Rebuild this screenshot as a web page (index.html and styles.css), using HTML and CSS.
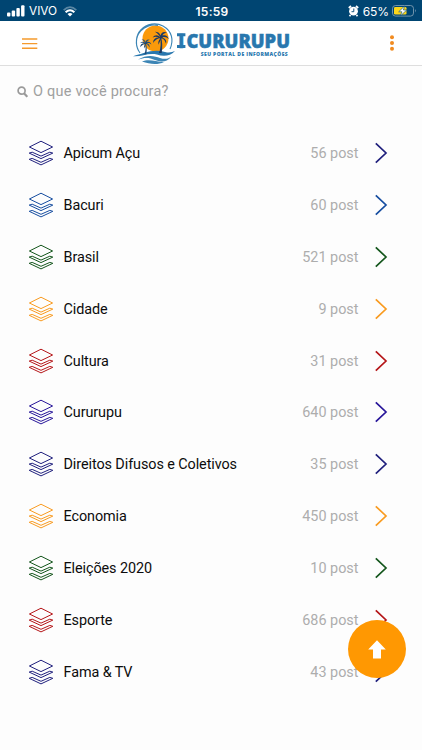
FILE: index.html
```
<!DOCTYPE html>
<html lang="pt-BR">
<head>
<meta charset="utf-8">
<title>ICURURUPU</title>
<link rel="stylesheet" href="styles.css">
</head>
<body>
<svg class="defs" width="0" height="0">
  <symbol id="layers" viewBox="0 0 26 26">
    <path d="M13 1.2 24.6 7 13 12.6 1.4 7Z"/>
    <path d="M1.2 13.1 4.2 12.2 13 16.1 21.8 12.2 24.8 13.1 13 18.6Z"/>
    <path d="M1.2 19.3 4.2 18.4 13 22.3 21.8 18.4 24.8 19.3 13 24.9Z"/>
  </symbol>
  <symbol id="chevron" viewBox="0 0 14 22"><path d="M1.8 1.3 12 11 1.8 20.7"/></symbol>
  <symbol id="palm" viewBox="0 0 18 26">
    <path d="M8.4 8C9.8 13 9.4 19 7.4 25H10.3C11.3 18 11 12 9.6 8Z"/>
    <path d="M9 8C6 5 3 5 .5 8 3 7 5 7 7 8 3 8 1 10 1 14 3 11 6 9 9 9 7 11 6 13 7 16 8 13 9 11 10 9 13 10 14 12 15 15 16 11 14 9 11 8 14 7 16 8 18 10 17 6 14 5 11 6 12 4 14 3 16 3 12 1 10 3 9 6 8 3 6 2 3 2 6 4 7 5 9 8Z"/>
  </symbol>
</svg>
<header>
  <div class="status">
    <div class="carrier">
      <svg width="18" height="12" viewBox="0 0 18 12" fill="#fff"><rect y="7.4" width="3.4" height="4" rx="1"/><rect x="4.7" y="5.4" width="3.4" height="6" rx="1"/><rect x="9.4" y="3" width="3.4" height="8.4" rx="1"/><rect x="14.1" y=".3" width="3.4" height="11.1" rx="1"/></svg>
      <span class="vivo">VIVO</span>
      <svg width="14" height="11" viewBox="0 0 14 11" fill="none" stroke="#fff" stroke-width="1.8"><path d="M.7 4.2Q7-1.9 13.3 4.2" opacity=".35"/><path d="M2.6 6.3Q7 2.2 11.4 6.3" stroke-width="2"/><path d="M4.5 8.1Q7 6.1 9.5 8.1L7 10.6Z" fill="#fff" stroke="none"/></svg>
    </div>
    <div class="clock">15:59</div>
    <div class="power">
      <svg width="11" height="12" viewBox="0 0 11 12"><circle cx="5.5" cy="6.2" r="4.4" fill="#fff"/><path d="M.8 3 3 1M10.2 3 8 1M2.5 10 1.5 11.3M8.5 10 9.5 11.3" stroke="#fff" stroke-width="1.7"/><path d="M5.8 3.5V6.7H3.5" fill="none" stroke="#004572" stroke-width=".9"/></svg>
      <span class="percent">65%</span>
      <svg width="25" height="12" viewBox="0 0 25 12"><rect x=".5" y=".5" width="21" height="10.6" rx="3" fill="none" stroke="#8ba7ba" stroke-width=".8"/><rect x="2" y="2" width="12.5" height="7.6" rx="1.3" fill="#fbd61c"/><path d="M12.7.9 6.7 6.8H10L8.2 11 14.8 5H11.4Z" fill="#fff" stroke="#004572" stroke-width=".6"/><path d="M23.3 4Q24.8 5.8 23.3 7.6Z" fill="#8ba7ba"/></svg>
    </div>
  </div>
  <div class="bar">
    <svg class="menu" width="16" height="13" viewBox="0 0 16 13" stroke="#f59a2d" stroke-width="1.4"><path d="M0 2H15.3M0 6.6H15.3M0 11.2H15.3"/></svg>
    <svg class="logo" width="164" height="44" viewBox="0 0 164 44">
      <circle cx="23.5" cy="17.5" r="13" fill="#fa9a0b"/>
      <path d="M6.7 30C2.8 23 4 14 8.8 9 15 2.4 24 1.3 31 5 40 10 42 19 38 28M8 32C3 25 3.3 16 8.8 10 13 5.2 20 3 26 4.5" fill="none" stroke="#3c85b5" stroke-width="1.1"/>
      <path d="M1 35.2C11 33 20 27.500 33 31 38 32.200 40 31 43 30 38 35.500 31 35.500 25 33.500 16 31.500 9 36 1 35.200Z" fill="#2877ae"/>
      <path d="M6 38.500C15 33 23 35 28 37 34 39 37 37 39 36 35 41.500 28 41 23 39 17 36 12 36.500 6 38.500ZM10 40.500C17 37.500 23 40.500 32 41 26 44 18 43.500 10 40.500Z" fill="#3c85b5"/>
      <use href="#palm" x="19.500" y="9" width="18" height="24" fill="#1d3a63"/>
      <use href="#palm" x="7" y="17" width="13" height="17" fill="#1d4a78"/>
      <path d="M45 12.200H53.400V15.200H45ZM45 24H53.400V27H45Z" fill="#2877ae"/>
      <text class="brand" x="46.200" y="27" textLength="6" lengthAdjust="spacingAndGlyphs">I</text>
      <text class="brand" x="54.500" y="27" textLength="103.500" lengthAdjust="spacingAndGlyphs">CURURUPU</text>
      <text class="tagline" x="68.700" y="34.800" textLength="87" lengthAdjust="spacing">SEU PORTAL DE INFORMAÇÕES</text>
    </svg>
    <svg class="more" width="6" height="18" viewBox="0 0 6 18" fill="#f18b20"><circle cx="3" cy="3.2" r="2"/><circle cx="3" cy="9" r="2"/><circle cx="3" cy="14.8" r="2"/></svg>
  </div>
</header>
<main>
  <div class="search">
    <svg width="11" height="12" viewBox="0 0 11 12" fill="none" stroke="#9a9a9a"><circle cx="4.6" cy="4.7" r="3.5" stroke-width="1.7"/><path d="M7 7.3 10.3 10.8" stroke-width="2.200"/></svg>
    <span>O que você procura?</span>
  </div>
  <ul class="list">
    <li class="row navy"><svg class="layers"><use href="#layers"/></svg><span class="name">Apicum Açu</span><span class="count">56 post</span><svg class="chevron"><use href="#chevron"/></svg></li>
    <li class="row blue"><svg class="layers"><use href="#layers"/></svg><span class="name">Bacuri</span><span class="count">60 post</span><svg class="chevron"><use href="#chevron"/></svg></li>
    <li class="row green"><svg class="layers"><use href="#layers"/></svg><span class="name">Brasil</span><span class="count">521 post</span><svg class="chevron"><use href="#chevron"/></svg></li>
    <li class="row orange"><svg class="layers"><use href="#layers"/></svg><span class="name">Cidade</span><span class="count">9 post</span><svg class="chevron"><use href="#chevron"/></svg></li>
    <li class="row red"><svg class="layers"><use href="#layers"/></svg><span class="name">Cultura</span><span class="count">31 post</span><svg class="chevron"><use href="#chevron"/></svg></li>
    <li class="row indigo"><svg class="layers"><use href="#layers"/></svg><span class="name">Cururupu</span><span class="count">640 post</span><svg class="chevron"><use href="#chevron"/></svg></li>
    <li class="row navy"><svg class="layers"><use href="#layers"/></svg><span class="name">Direitos Difusos e Coletivos</span><span class="count">35 post</span><svg class="chevron"><use href="#chevron"/></svg></li>
    <li class="row orange"><svg class="layers"><use href="#layers"/></svg><span class="name">Economia</span><span class="count">450 post</span><svg class="chevron"><use href="#chevron"/></svg></li>
    <li class="row green"><svg class="layers"><use href="#layers"/></svg><span class="name">Eleições 2020</span><span class="count">10 post</span><svg class="chevron"><use href="#chevron"/></svg></li>
    <li class="row red"><svg class="layers"><use href="#layers"/></svg><span class="name">Esporte</span><span class="count">686 post</span><svg class="chevron"><use href="#chevron"/></svg></li>
    <li class="row navy"><svg class="layers"><use href="#layers"/></svg><span class="name">Fama &amp; TV</span><span class="count">43 post</span><svg class="chevron"><use href="#chevron"/></svg></li>
  </ul>
</main>
<div class="to-top"><svg width="18" height="19" viewBox="0 0 18 19" fill="#fff"><path d="M9 .2 17.8 9.4H13V18.4H5V9.4H.2Z"/></svg></div>
</body>
</html>
```
FILE: styles.css
```
* { box-sizing: border-box; }
body {
  margin: 0;
  width: 422px;
  height: 750px;
  overflow: hidden;
  background: #fdfdfd;
  font-family: Roboto, sans-serif;
  color: #0c0c0c;
}
svg { display: block; flex: none; }
.defs { position: absolute; }
.status {
  height: 21px;
  display: grid;
  grid-template-columns: 1fr auto 1fr;
  align-items: center;
  padding: 1px 5px 0 7px;
  background: #004572;
  color: #fff;
  font-family: Inter, sans-serif;
  font-size: 12px;
}
.carrier, .power { display: flex; align-items: center; }
.vivo { margin: 0 6px 0 4px; font-size: 11.8px; }
.clock { font-weight: 600; letter-spacing: 0.3px; }
.power { justify-content: flex-end; }
.percent { margin: 0 3px 0 4px; letter-spacing: -0.1px; }
.bar {
  height: 45px;
  display: grid;
  grid-template-columns: 110px 1fr auto;
  align-items: center;
  padding: 0 27px 0 22px;
  background: #fff;
  border-bottom: 1px solid #dedede;
}
.brand {
  font: 800 20px "Open Sans", sans-serif;
  fill: #2877ae;
  stroke: #2877ae;
  stroke-width: 0.5px;
}
.tagline { font: 800 5px "Open Sans", sans-serif; fill: #2877ae; }
.search {
  display: flex;
  align-items: center;
  gap: 5.5px;
  height: 51px;
  padding: 0 17px;
  padding-left: 16.5px;
  color: #a0a0a0;
  font-size: 14.5px;
  letter-spacing: 0.23px;
}
.list { list-style: none; margin: 0; padding: 10px 34px 0 28px; }
.row { display: flex; align-items: center; height: 51.9px; }
.layers {
  width: 26px;
  height: 26px;
  fill: none;
  stroke: currentColor;
  stroke-width: 1;
}
.chevron {
  width: 14px;
  height: 22px;
  margin-left: 15.5px;
  fill: none;
  stroke: currentColor;
  stroke-width: 1.7;
}
.name, .count { font-size: 14.4px; padding-top: 1px; }
.name {
  margin-left: 9.5px;
  flex: 1;
  color: #0c0c0c;
  letter-spacing: -0.08px;
}
.count { color: #adadad; }
.navy { color: #20207d; }
.indigo { color: #28169a; }
.blue { color: #164da0; }
.green { color: #14561c; }
.orange { color: #f99b20; }
.red { color: #b51518; }
.to-top {
  position: absolute;
  left: 348px;
  top: 620px;
  width: 58px;
  height: 58px;
  display: flex;
  align-items: center;
  justify-content: center;
  border-radius: 50%;
  background: #ff9802;
}
```
